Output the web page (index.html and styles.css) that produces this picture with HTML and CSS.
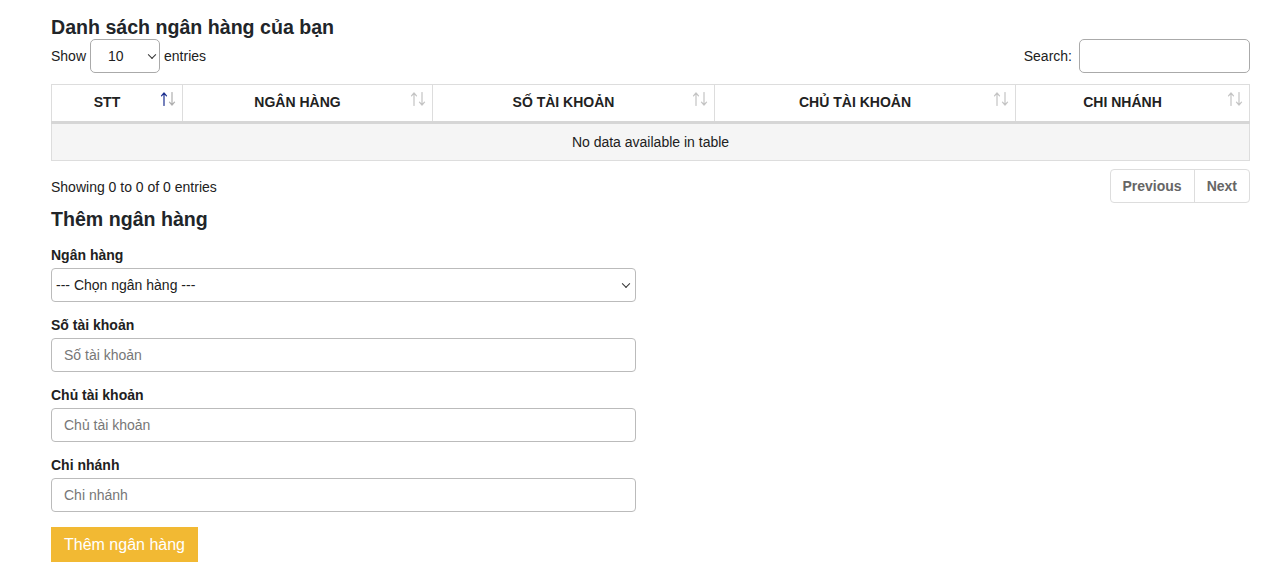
FILE: index.html
```html
<!DOCTYPE html>
<html lang="vi">
<head>
<meta charset="utf-8">
<title>Ngân hàng</title>
<link rel="stylesheet" href="styles.css">
</head>
<body>
<div class="page">
  <h2 class="title">Danh sách ngân hàng của bạn</h2>
  <div class="toolbar">
    <label class="length">Show
      <span class="select-wrap small">
        <select class="dt-select"><option>10</option><option>25</option></select>
      </span>
      entries</label>
    <label class="search">Search: <input type="search" class="dt-search"></label>
  </div>
  <table class="dt">
    <thead>
      <tr>
        <th class="c1 asc">STT<svg class="sort" viewBox="0 0 16 14" width="16" height="14"><path class="up" d="M4 13.5V1M1.5 3.8L4 1l2.5 2.8"/><path class="down" d="M12 0.5V13M9.5 10.2L12 13l2.5-2.8"/></svg></th>
        <th class="c2">NGÂN HÀNG<svg class="sort" viewBox="0 0 16 14" width="16" height="14"><path class="up" d="M4 13.5V1M1.5 3.8L4 1l2.5 2.8"/><path class="down" d="M12 0.5V13M9.5 10.2L12 13l2.5-2.8"/></svg></th>
        <th class="c3">SỐ TÀI KHOẢN<svg class="sort" viewBox="0 0 16 14" width="16" height="14"><path class="up" d="M4 13.5V1M1.5 3.8L4 1l2.5 2.8"/><path class="down" d="M12 0.5V13M9.5 10.2L12 13l2.5-2.8"/></svg></th>
        <th class="c4">CHỦ TÀI KHOẢN<svg class="sort" viewBox="0 0 16 14" width="16" height="14"><path class="up" d="M4 13.5V1M1.5 3.8L4 1l2.5 2.8"/><path class="down" d="M12 0.5V13M9.5 10.2L12 13l2.5-2.8"/></svg></th>
        <th class="c5">CHI NHÁNH<svg class="sort" viewBox="0 0 16 14" width="16" height="14"><path class="up" d="M4 13.5V1M1.5 3.8L4 1l2.5 2.8"/><path class="down" d="M12 0.5V13M9.5 10.2L12 13l2.5-2.8"/></svg></th>
      </tr>
    </thead>
    <tbody>
      <tr><td colspan="5" class="empty">No data available in table</td></tr>
    </tbody>
  </table>
  <div class="footer">
    <div class="info">Showing 0 to 0 of 0 entries</div>
    <div class="paging"><span class="pbtn">Previous</span><span class="pbtn">Next</span></div>
  </div>
  <h3 class="subtitle">Thêm ngân hàng</h3>
  <form class="form">
    <div class="group">
      <label class="lbl">Ngân hàng</label>
      <span class="select-wrap">
        <select class="ctrl sel"><option>--- Chọn ngân hàng ---</option></select>
      </span>
    </div>
    <div class="group">
      <label class="lbl">Số tài khoản</label>
      <input class="ctrl" placeholder="Số tài khoản">
    </div>
    <div class="group">
      <label class="lbl">Chủ tài khoản</label>
      <input class="ctrl" placeholder="Chủ tài khoản">
    </div>
    <div class="group">
      <label class="lbl">Chi nhánh</label>
      <input class="ctrl" placeholder="Chi nhánh">
    </div>
    <button type="button" class="submit">Thêm ngân hàng</button>
  </form>
</div>
</body>
</html>
```

FILE: styles.css
```css
* { box-sizing: border-box; }
html, body { margin: 0; padding: 0; background: #fff; }
body {
  font-family: "Liberation Sans", Arial, sans-serif;
  font-size: 14px;
  color: #212121;
}
.page {
  padding: 15px 18px 0 51px;
  display: flex;
  flex-direction: column;
}
.title {
  margin: 0;
  font-size: 19.6px;
  font-weight: bold;
  line-height: 24px;
  color: #212529;
}
.toolbar {
  display: flex;
  justify-content: space-between;
  align-items: center;
  height: 34px;
}
.length, .search { display: flex; align-items: center; gap: 4px; }
.select-wrap { position: relative; display: inline-block; }
.select-wrap::after {
  content: "";
  position: absolute;
  right: 7px;
  top: 50%;
  width: 5px;
  height: 5px;
  border-right: 1.6px solid #333;
  border-bottom: 1.6px solid #333;
  transform: translateY(-70%) rotate(45deg);
  pointer-events: none;
}
.select-wrap.small::after { right: 5px; }
.dt-select {
  appearance: none;
  -webkit-appearance: none;
  width: 70px;
  height: 34px;
  border: 1px solid #aaa;
  border-radius: 5px;
  background: #fff;
  font: inherit;
  color: #212121;
  padding: 0 0 0 17px;
}
.dt-search {
  width: 171px;
  height: 34px;
  border: 1px solid #aaa;
  border-radius: 5px;
  margin-left: 3px;
  font: inherit;
}
.dt {
  margin-top: 11px;
  width: 100%;
  border-collapse: collapse;
  border: 1px solid #ddd;
}
.dt th {
  position: relative;
  height: 38px;
  padding: 0 28px 2px 8px;
  font-weight: bold;
  font-size: 14px;
  color: #222;
  text-align: center;
  border-right: 1px solid #ddd;
  border-bottom: 3px solid #d6d6d6;
  background: #fff;
}
.dt th:last-child { border-right: none; }
.c1 { width: 131px; }
.c2 { width: 250px; }
.c3 { width: 282px; }
.c4 { width: 301px; }
.sort {
  position: absolute;
  right: 6px;
  top: 7px;
  fill: none;
  stroke-width: 1.2;
  stroke-linecap: round;
  stroke-linejoin: round;
}
.sort path { stroke: #c4c4c4; }
.asc .sort .up { stroke: #1c2f8f; }
.asc .sort .down { stroke: #b0b0b0; }
.dt td.empty {
  height: 38px;
  text-align: center;
  background: #f5f5f5;
  color: #212121;
}
.footer {
  display: flex;
  justify-content: space-between;
  align-items: center;
  margin-top: 8px;
  height: 34px;
}
.info { padding-top: 2px; }
.paging {
  display: flex;
  border: 1px solid #ddd;
  border-radius: 4px;
  height: 34px;
}
.pbtn {
  display: flex;
  align-items: center;
  padding: 0 12px;
  font-weight: bold;
  color: #666;
}
.pbtn + .pbtn { border-left: 1px solid #ddd; }
.subtitle {
  margin: 4px 0 0;
  font-size: 19.6px;
  line-height: 24px;
  font-weight: bold;
  color: #212529;
}
.form {
  width: 585px;
  display: flex;
  flex-direction: column;
  margin-top: 14px;
}
.group { display: flex; flex-direction: column; margin-bottom: 13px; }
.lbl {
  font-weight: bold;
  line-height: 20px;
  margin-bottom: 3px;
  color: #212121;
}
.group .select-wrap { display: block; }
.ctrl {
  width: 100%;
  height: 34px;
  border: 1px solid #bbb;
  border-radius: 4px;
  padding: 0 12px;
  font: inherit;
  color: #212121;
  background: #fff;
}
.ctrl::placeholder { color: #777; }
.sel {
  appearance: none;
  -webkit-appearance: none;
  padding-left: 4px;
}
.submit {
  align-self: flex-start;
  margin-top: 2px;
  height: 35px;
  width: 147px;
  border: none;
  background: #f2b933;
  color: #fff;
  font: inherit;
  font-size: 16px;
}
```
